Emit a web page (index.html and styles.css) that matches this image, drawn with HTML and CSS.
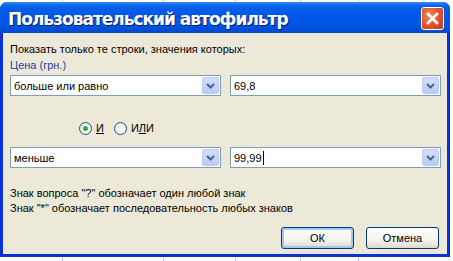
FILE: index.html
```html
<!DOCTYPE html>
<html lang="ru">
<head>
    <meta charset="UTF-8">
    <title>Пользовательский автофильтр</title>
    <link rel="stylesheet" href="styles.css">
</head>
<body>
    <div class="window">
        <div class="titlebar">
            <div class="title">Пользовательский автофильтр</div>
            <div class="close-btn">
                <svg viewBox="0 0 21 21" width="21" height="21">
                    <path d="M6 6 L15 15 M15 6 L6 15" stroke="#fff" stroke-width="2.6" stroke-linecap="square"/>
                </svg>
            </div>
        </div>
        <div class="dialog">
            <div class="label">Показать только те строки, значения которых:</div>
            <div class="label field-name">Цена (грн.)</div>

            <div class="row">
                <div class="combo">
                    <span class="combo-text">больше или равно</span>
                    <span class="combo-btn"><svg viewBox="0 0 9 6" width="9" height="6"><path d="M1 1 L4.5 4.5 L8 1" fill="none" stroke="#4d6185" stroke-width="2"/></svg></span>
                </div>
                <div class="combo">
                    <span class="combo-text">69,8</span>
                    <span class="combo-btn"><svg viewBox="0 0 9 6" width="9" height="6"><path d="M1 1 L4.5 4.5 L8 1" fill="none" stroke="#4d6185" stroke-width="2"/></svg></span>
                </div>
            </div>

            <div class="radios">
                <label class="radio checked"><span class="dot"></span><span><u>И</u></span></label>
                <label class="radio"><span class="dot"></span><span>И<u>Л</u>И</span></label>
            </div>

            <div class="row">
                <div class="combo">
                    <span class="combo-text">меньше</span>
                    <span class="combo-btn"><svg viewBox="0 0 9 6" width="9" height="6"><path d="M1 1 L4.5 4.5 L8 1" fill="none" stroke="#4d6185" stroke-width="2"/></svg></span>
                </div>
                <div class="combo">
                    <span class="combo-text">99,99<span class="caret"></span></span>
                    <span class="combo-btn"><svg viewBox="0 0 9 6" width="9" height="6"><path d="M1 1 L4.5 4.5 L8 1" fill="none" stroke="#4d6185" stroke-width="2"/></svg></span>
                </div>
            </div>

            <div class="help">
                <div>Знак вопроса "?" обозначает один любой знак</div>
                <div>Знак "*" обозначает последовательность любых знаков</div>
            </div>

            <div class="buttons">
                <button class="btn default">ОК</button>
                <button class="btn">Отмена</button>
            </div>
        </div>
    </div>
</body>
</html>
```

FILE: styles.css
```css
* {
    margin: 0;
    padding: 0;
    box-sizing: border-box;
}

body {
    width: 453px;
    height: 261px;
    overflow: hidden;
    font-family: "Liberation Sans", Arial, sans-serif;
    font-size: 11px;
    color: #000;
    background-color: #fff;
    background-image:
        linear-gradient(to right, transparent 62px, #c8c8c8 62px, #c8c8c8 63px, transparent 63px),
        linear-gradient(to right, transparent 163px, #c8c8c8 163px, #c8c8c8 164px, transparent 164px),
        linear-gradient(to right, transparent 235px, #c8c8c8 235px, #c8c8c8 236px, transparent 236px),
        linear-gradient(to right, transparent 300px, #c8c8c8 300px, #c8c8c8 301px, transparent 301px),
        linear-gradient(to right, transparent 358px, #c8c8c8 358px, #c8c8c8 359px, transparent 359px);
}

.window {
    width: 450px;
    height: 255px;
    margin-top: 2px;
    display: flex;
    flex-direction: column;
    border-radius: 7px 7px 0 0;
    background: #0831d9;
}

.titlebar {
    height: 31px;
    flex-shrink: 0;
    display: flex;
    align-items: center;
    justify-content: space-between;
    padding: 0 6px 0 8px;
    border-radius: 7px 7px 0 0;
    background: linear-gradient(to bottom, #3b8cf5 0%, #0a62e8 12%, #0058e6 40%, #0054e3 75%, #0049cc 100%);
}

.title {
    color: #fff;
    font-family: "DejaVu Sans", sans-serif;
    font-weight: bold;
    font-size: 17px;
    letter-spacing: -1px;
    text-shadow: 1px 1px 0 #0a1c73;
    padding-top: 2px;
}

.close-btn {
    width: 23px;
    height: 23px;
    border: 1px solid #fff;
    border-radius: 3px;
    background: radial-gradient(circle at 35% 35%, #f08a5a 0%, #e0502c 55%, #c03a18 100%);
    display: flex;
    align-items: center;
    justify-content: center;
    margin-top: 2px;
}

.dialog {
    flex-grow: 1;
    margin: 0 3px 3px 3px;
    background: #ece9d8;
    padding: 9px 6px 0 7px;
    display: flex;
    flex-direction: column;
}

.label {
    line-height: 15px;
}

.field-name {
    color: #1c3ca8;
    margin-top: 1px;
}

.row {
    display: flex;
    gap: 9px;
    margin-top: 2px;
}

.combo {
    width: 211px;
    height: 21px;
    background: #fff;
    border: 1px solid #7f9db9;
    display: flex;
    align-items: center;
    justify-content: space-between;
    padding: 1px;
}

.combo-text {
    padding-left: 2px;
    display: flex;
    align-items: center;
}

.caret {
    display: inline-block;
    width: 1px;
    height: 14px;
    background: #000;
    margin-left: 1px;
}

.combo-btn {
    width: 17px;
    height: 17px;
    border: 1px solid #bacdf6;
    border-radius: 2px;
    background: linear-gradient(to bottom, #d2defc 0%, #b8cbf7 100%);
    display: flex;
    align-items: center;
    justify-content: center;
}

.radios {
    display: flex;
    gap: 10px;
    margin: 24px 0 0 69px;
    height: 16px;
    align-items: center;
}

.radio {
    display: flex;
    align-items: center;
    gap: 4px;
}

.dot {
    width: 13px;
    height: 13px;
    border-radius: 50%;
    border: 1px solid #1c5180;
    background: radial-gradient(circle at 70% 70%, #fff 0%, #e4e2da 100%);
    display: flex;
    align-items: center;
    justify-content: center;
}

.radio.checked .dot::after {
    content: '';
    width: 5px;
    height: 5px;
    border-radius: 50%;
    background: #2fb12f;
}

.radios + .row {
    margin-top: 11px;
}

.help {
    margin-top: 18px;
    line-height: 15px;
}

.buttons {
    display: flex;
    justify-content: flex-end;
    gap: 12px;
    margin-top: 11px;
    padding-right: 2px;
}

.btn {
    width: 73px;
    height: 22px;
    font-family: "Liberation Sans", Arial, sans-serif;
    font-size: 11px;
    border: 1px solid #003c74;
    border-radius: 3px;
    background: linear-gradient(to bottom, #ffffff 0%, #f4f3ee 60%, #dcdad0 100%);
}

.btn.default {
    box-shadow: inset 0 0 0 2px #a9c3f5;
}
```
